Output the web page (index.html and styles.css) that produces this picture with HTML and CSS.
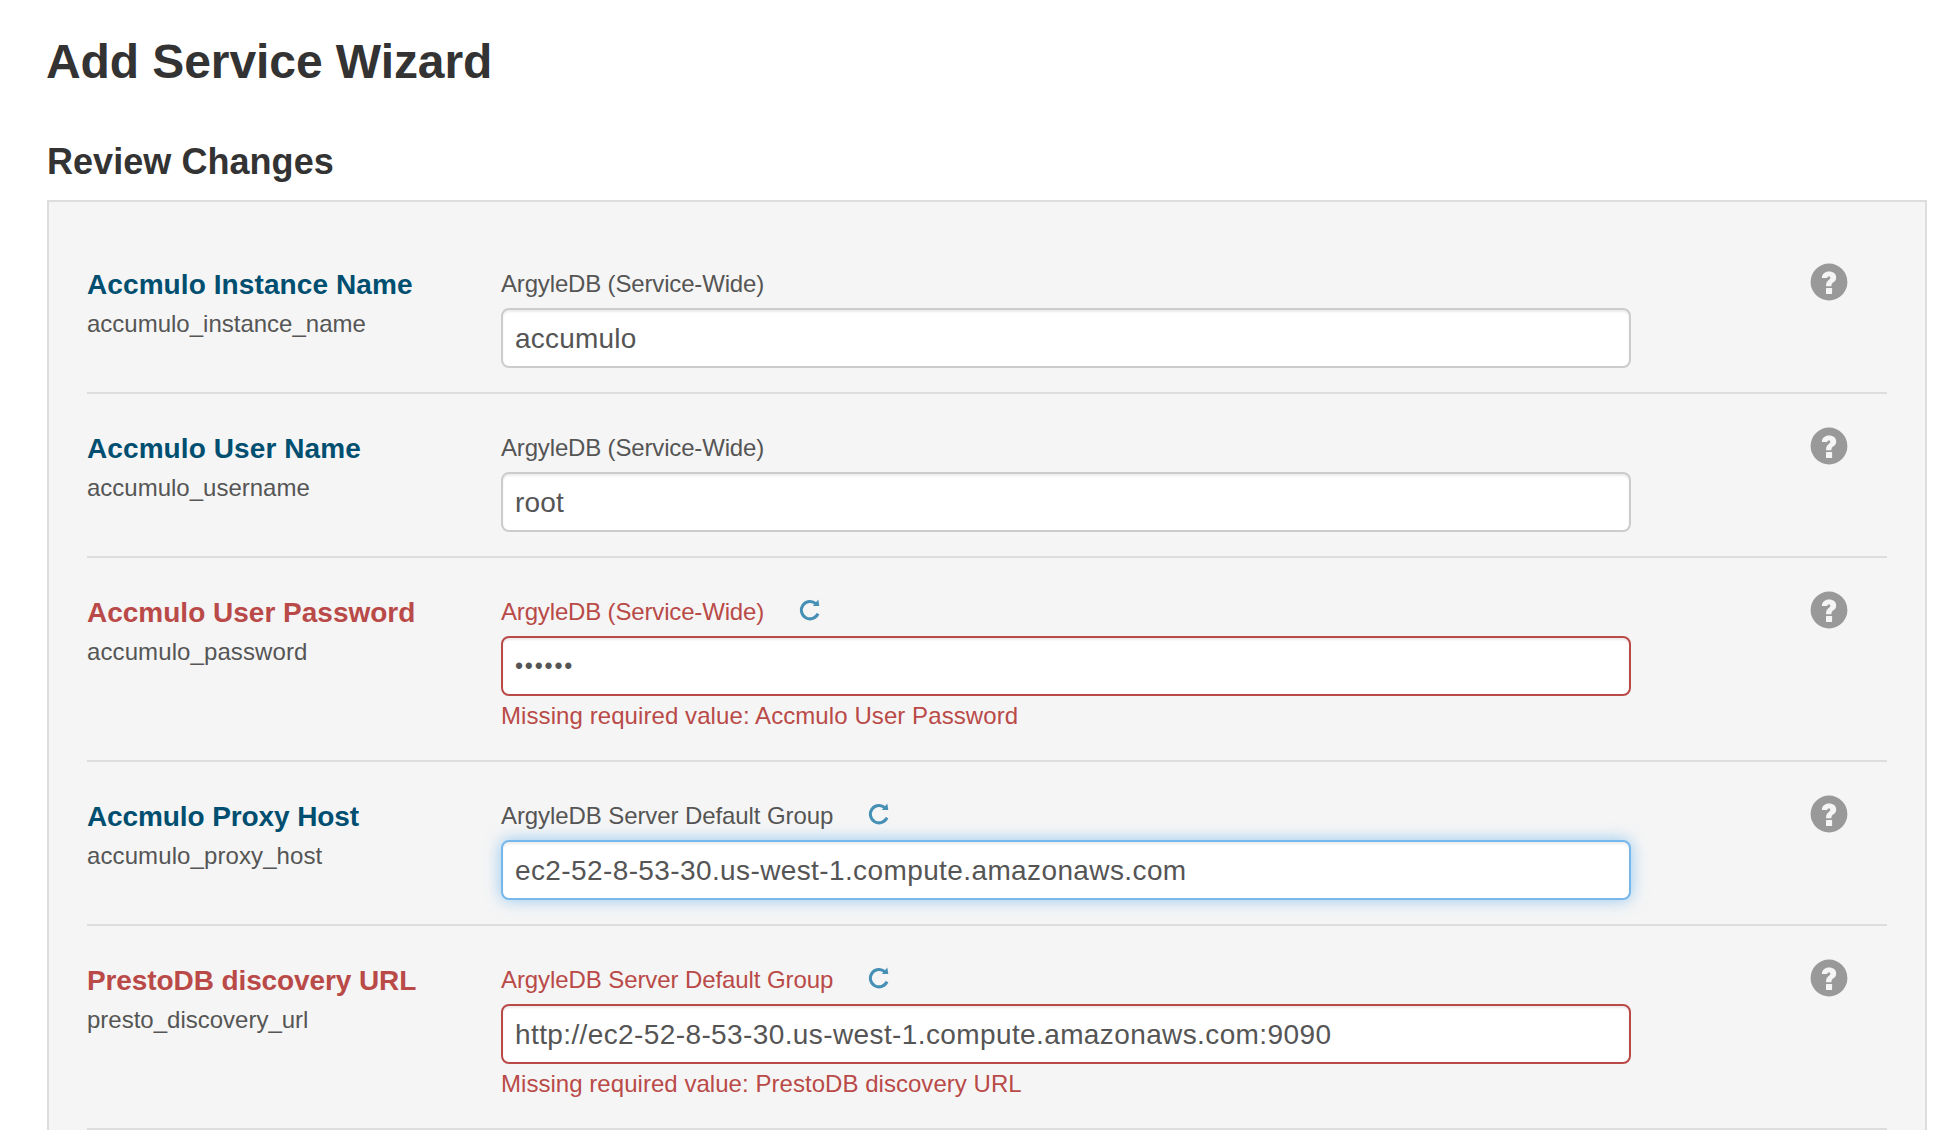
FILE: index.html
```html
<!DOCTYPE html>
<html lang="en">
<head>
<meta charset="utf-8">
<title>Add Service Wizard</title>
<link rel="stylesheet" href="styles.css">
</head>
<body>
<svg class="sprite" aria-hidden="true">
  <symbol id="help" viewBox="0 0 38 38">
    <circle cx="19" cy="19" r="18.4" fill="#999"/>
    <path fill="#f5f5f5" d="M11.800 14.900C12 10.900 15 8.600 19.100 8.600c4.200 0 7.100 2.300 7.100 5.800 0 2.600-1.500 4-3.100 5.200-1.300 1-1.700 1.800-1.700 3.700H16c0-3.400.8-4.600 2.500-6 1.300-1 1.800-1.600 1.800-2.500 0-.8-.5-1.200-1.300-1.200-1 0-1.700.5-1.800 1.300z"/>
    <rect x="16" y="25.100" width="6.100" height="6" rx=".5" fill="#f5f5f5"/>
  </symbol>
  <symbol id="refresh" viewBox="0 0 24 24">
    <path fill="none" stroke="#468fb5" stroke-width="3" d="M20 15.700A8.700 8.700 0 1 1 17.800 5.600"/>
    <path fill="#468fb5" d="M20.300 1.600l1 6.300h-6.400z"/>
  </symbol>
</svg>

<h1 class="page-title">Add Service Wizard</h1>
<h2 class="step-title">Review Changes</h2>

<form class="panel">
  <section class="row">
    <div class="property">
      <div class="name">Accmulo Instance Name</div>
      <div class="key">accumulo_instance_name</div>
    </div>
    <div class="field">
      <div class="scope"><span class="scope-service">ArgyleDB (Service-Wide)</span></div>
      <input class="value" type="text" value="accumulo">
    </div>
    <svg class="help"><use href="#help"/></svg>
  </section>

  <section class="row">
    <div class="property">
      <div class="name">Accmulo User Name</div>
      <div class="key">accumulo_username</div>
    </div>
    <div class="field">
      <div class="scope"><span class="scope-service">ArgyleDB (Service-Wide)</span></div>
      <input class="value" type="text" value="root">
    </div>
    <svg class="help"><use href="#help"/></svg>
  </section>

  <section class="row invalid">
    <div class="property">
      <div class="name snug">Accmulo User Password</div>
      <div class="key wide">accumulo_password</div>
    </div>
    <div class="field">
      <div class="scope"><span class="scope-service">ArgyleDB (Service-Wide)</span><svg class="refresh"><use href="#refresh"/></svg></div>
      <input class="value secret" type="password" value="secret">
      <div class="error">Missing required value: Accmulo User Password</div>
    </div>
    <svg class="help"><use href="#help"/></svg>
  </section>

  <section class="row">
    <div class="property">
      <div class="name tight">Accmulo Proxy Host</div>
      <div class="key wide">accumulo_proxy_host</div>
    </div>
    <div class="field">
      <div class="scope"><span class="scope-group">ArgyleDB Server Default Group</span><svg class="refresh"><use href="#refresh"/></svg></div>
      <input class="value host active" type="text" value="ec2-52-8-53-30.us-west-1.compute.amazonaws.com">
    </div>
    <svg class="help"><use href="#help"/></svg>
  </section>

  <section class="row invalid">
    <div class="property">
      <div class="name tight">PrestoDB discovery URL</div>
      <div class="key">presto_discovery_url</div>
    </div>
    <div class="field">
      <div class="scope"><span class="scope-group">ArgyleDB Server Default Group</span><svg class="refresh"><use href="#refresh"/></svg></div>
      <input class="value host" type="text" value="http://ec2-52-8-53-30.us-west-1.compute.amazonaws.com:9090">
      <div class="error snug">Missing required value: PrestoDB discovery URL</div>
    </div>
    <svg class="help"><use href="#help"/></svg>
  </section>
</form>
</body>
</html>
```

FILE: styles.css
```css
* { box-sizing: border-box; }

html { height: 100%; overflow: hidden; }

body {
  margin: 0;
  padding: 32px 29px 0 47px;
  background: #fff;
  color: #555;
  font: 24px/40px "Liberation Sans", Arial, sans-serif;
}

.sprite { display: none; }

.page-title {
  margin: 0 0 0 -1px;
  color: #333;
  font-size: 48px;
  line-height: 60px;
  letter-spacing: -0.08px;
}

.step-title {
  margin: 50px 0 18px;
  color: #333;
  font-size: 36px;
  line-height: 40px;
  letter-spacing: 0.05px;
}

.panel {
  padding: 28px 38px;
  border: 2px solid #ddd;
  background: #f5f5f5;
}

.row {
  display: grid;
  grid-template-columns: 414px 1130px 1fr;
  padding: 34px 0 24px;
  border-bottom: 2px solid #ddd;
}

.name {
  margin-bottom: -2px;
  color: #004f70;
  font-size: 28px;
  font-weight: bold;
  line-height: 42px;
  letter-spacing: 0.09px;
}

.name.snug { letter-spacing: 0; }
.name.tight { letter-spacing: -0.1px; }

.key.wide { letter-spacing: 0.1px; }

.scope {
  display: flex;
  gap: 34px;
  margin-bottom: 4px;
}

.scope-service { letter-spacing: -0.16px; }
.scope-group { letter-spacing: -0.09px; }

.refresh {
  width: 24px;
  height: 24px;
  margin-top: 6px;
}

.value {
  display: block;
  width: 100%;
  height: 60px;
  padding: 2px 12px 0;
  border: 2px solid #ccc;
  border-radius: 8px;
  background: #fff;
  box-shadow: inset 0 2px 2px rgba(0, 0, 0, 0.075);
  color: #555;
  font: 28px/40px "Liberation Sans", Arial, sans-serif;
  letter-spacing: 0.2px;
  outline: 0;
}

.value.host { letter-spacing: 0.39px; }

.value.secret {
  padding: 0 12px;
  font-size: 23px;
  letter-spacing: 1.8px;
}

.value.active {
  border-color: #76b7ec;
  box-shadow: inset 0 2px 2px rgba(0, 0, 0, 0.075), 0 0 16px rgba(82, 168, 236, 0.6);
}

.error {
  color: #b94a48;
  letter-spacing: 0.08px;
}

.error.snug { letter-spacing: 0.04px; }

.invalid .name,
.invalid .scope { color: #b94a48; }

.invalid .value { border-color: #b94a48; }

.help {
  width: 38px;
  height: 38px;
  margin: -1px 0 0 179px;
}
```
